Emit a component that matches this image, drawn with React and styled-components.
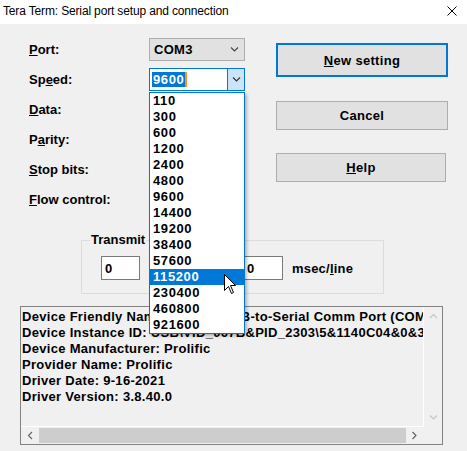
import React from 'react';
import styled, { createGlobalStyle } from 'styled-components';

const GlobalStyle = createGlobalStyle`
  html, body {
    margin: 0;
    padding: 0;
    background: #f0f0f0;
    overflow: hidden;
  }
  * { box-sizing: border-box; }
`

const Window = styled.div`
  width: 467px;
  height: 451px;
  position: relative;
  display: flex;
  flex-direction: column;
  background: #f0f0f0;
  font-family: "Liberation Sans", Arial, sans-serif;
  font-weight: 700;
  font-size: 13px;
  color: #000;
`
const TitleBar = styled.div`
  height: 24px;
  background: #fff;
  display: flex;
  align-items: center;
  justify-content: space-between;
  padding: 0 10px 2px 3px;
  font-weight: 400;
  font-size: 12px;
  letter-spacing: -0.15px;
`
const Top = styled.div`
  display: flex;
`
const Form = styled.div`
  display: grid;
  grid-template-columns: 120px 96px;
  grid-auto-rows: 23px;
  row-gap: 7px;
  padding: 14px 0 0 29px;
`
const Label = styled.div`
  display: flex;
  align-items: center;
  line-height: 16px;
`
const Combo = styled.div`
  display: flex;
  align-items: center;
  height: 23px;
  border: 1px solid ${p => (p.$focus ? '#0078d7' : '#adadad')};
  background: ${p => (p.$focus ? '#fff' : '#e1e1e1')};
`
const ComboText = styled.div`
  flex: 1;
  padding-left: 4px;
  display: flex;
  align-items: center;
  letter-spacing: 0.3px;
`
const Selected = styled.span`
  background: #0078d7;
  color: #fff;
  line-height: 15px;
  padding: 0 1px;
  margin-left: -2px;
  letter-spacing: 0.6px;
`
const Caret = styled.span`
  width: 2px;
  height: 15px;
  background: #f7931e;
`
const DropButton = styled.div`
  width: 17px;
  align-self: stretch;
  display: flex;
  align-items: center;
  justify-content: center;
  background: ${p => (p.$focus ? '#cce4f7' : 'transparent')};
  border-left: 1px solid ${p => (p.$focus ? '#0078d7' : 'transparent')};
  margin-right: ${p => (p.$focus ? '0' : '2px')};
`
const Buttons = styled.div`
  display: flex;
  flex-direction: column;
  align-items: flex-start;
  padding: 19px 0 0 31px;
`
const Button = styled.div`
  width: ${p => p.$w || 172}px;
  height: ${p => p.$h || 29}px;
  margin-bottom: ${p => p.$mb || 0}px;
  background: #e1e1e1;
  border: ${p => (p.$default ? '2px solid #0078d7' : '1px solid #adadad')};
  display: flex;
  align-items: center;
  justify-content: center;
  letter-spacing: 0.3px;
`
const Group = styled.fieldset`
  margin: 21px 0 0 81px;
  width: 303px;
  padding: 8px 0 13px 19px;
  border: 1px solid #dcdcdc;
  min-width: 0;
`
const Legend = styled.legend`
  margin-left: -11px;
  padding: 0 1px;
  line-height: 16px;
`
const GroupRow = styled.div`
  display: flex;
  align-items: center;
`
const Edit = styled.div`
  width: ${p => p.$w}px;
  height: 24px;
  background: #fff;
  border: 1px solid #7a7a7a;
  display: flex;
  align-items: center;
  padding-left: 3px;
`
const Unit = styled.div`
  width: ${p => p.$w || 'auto'};
  padding-left: ${p => p.$pl}px;
  letter-spacing: 0.2px;
`
const InfoBox = styled.div`
  margin: 12px 0 0 20px;
  width: 423px;
  height: 139px;
  border: 1px solid #828282;
  display: grid;
  grid-template-columns: 1fr 18px;
  grid-template-rows: 1fr 17px;
`
const InfoText = styled.div`
  overflow: hidden;
  white-space: nowrap;
  padding: 2px 0 0 1px;
  line-height: 16px;
  letter-spacing: 0.3px;
  background: #f0f0f0;
  border-right: 1px solid #fff;
  border-bottom: 1px solid #fff;
`
const VScroll = styled.div`
  display: flex;
  flex-direction: column;
  justify-content: space-between;
  align-items: center;
  padding: 6px 0 6px;
  background: #f0f0f0;
`
const HScroll = styled.div`
  display: flex;
  align-items: center;
  padding: 0 1px;
  background: #f0f0f0;
`
const Arrow = styled.div`
  width: 17px;
  height: 17px;
  display: flex;
  align-items: center;
  justify-content: center;
  flex: none;
`
const Thumb = styled.div`
  flex: 1;
  height: 15px;
  background: #cdcdcd;
`
const Corner = styled.div`
  background: #f0f0f0;
`
const DropList = styled.div`
  position: absolute;
  left: 149px;
  top: 92px;
  width: 96px;
  border: 1px solid #0078d7;
  background: #fff;
  box-shadow: 2px 2px 3px rgba(0, 0, 0, 0.25);
`
const Item = styled.div`
  height: 16px;
  line-height: 16px;
  padding-left: 3px;
  letter-spacing: 0.6px;
  background: ${p => (p.$active ? '#0078d7' : 'transparent')};
  color: ${p => (p.$active ? '#fff' : '#000')};
`
const Cursor = styled.svg`
  position: absolute;
  left: 224px;
  top: 274px;
`

const Chevron = ({ dir = 'down', color = '#444' }) => {
  const d = {
    down: 'M1 1.5 L4.5 5 L8 1.5',
    up: 'M1 5 L4.5 1.5 L8 5',
    left: 'M5 1 L1.5 4.5 L5 8',
    right: 'M1.5 1 L5 4.5 L1.5 8',
  }[dir];
  const vertical = dir === 'down' || dir === 'up';
  return (
    <svg width={vertical ? 9 : 7} height={vertical ? 7 : 9} viewBox={vertical ? '0 0 9 7' : '0 0 7 9'}>
      <path d={d} fill="none" stroke={color} strokeWidth="1.1" />
    </svg>
  );
};

const speeds = ['110', '300', '600', '1200', '2400', '4800', '9600', '14400', '19200', '38400', '57600', '115200', '230400', '460800', '921600'];

const info = [
  'Device Friendly Name: Prolific USB-to-Serial Comm Port (COM3)',
  'Device Instance ID: USB\\VID_067B&PID_2303\\5&1140C04&0&3',
  'Device Manufacturer: Prolific',
  'Provider Name: Prolific',
  'Driver Date: 9-16-2021',
  'Driver Version: 3.8.40.0',
];

export default function App() {
  return (
    <Window>
      <GlobalStyle />
      <TitleBar>
        <span>Tera Term: Serial port setup and connection</span>
        <svg width="10" height="10" viewBox="0 0 10 10">
          <path d="M0.5 0.5 L9.5 9.5 M9.5 0.5 L0.5 9.5" stroke="#000" strokeWidth="1" />
        </svg>
      </TitleBar>

      <Top>
        <Form>
          <Label><u>P</u>ort:</Label>
          <Combo>
            <ComboText>COM3</ComboText>
            <DropButton><Chevron /></DropButton>
          </Combo>

          <Label>Sp<u>e</u>ed:</Label>
          <Combo $focus>
            <ComboText><Selected>9600</Selected><Caret /></ComboText>
            <DropButton $focus><Chevron color="#333" /></DropButton>
          </Combo>

          {/* the remaining combos sit under the open list */}
          <Label><u>D</u>ata:</Label>
          <Combo><ComboText /><DropButton><Chevron /></DropButton></Combo>

          <Label>P<u>a</u>rity:</Label>
          <Combo><ComboText /><DropButton><Chevron /></DropButton></Combo>

          <Label><u>S</u>top bits:</Label>
          <Combo><ComboText /><DropButton><Chevron /></DropButton></Combo>

          <Label><u>F</u>low control:</Label>
          <Combo><ComboText /><DropButton><Chevron /></DropButton></Combo>
        </Form>

        <Buttons>
          <Button $default $h={34} $mb={24}><span><u>N</u>ew setting</span></Button>
          <Button $mb={23}>Cancel</Button>
          <Button $w={170}><span><u>H</u>elp</span></Button>
        </Buttons>
      </Top>

      <Group>
        <Legend>Transmit</Legend>
        <GroupRow>
          <Edit $w={39}>0</Edit>
          <Unit $w="103px" $pl={8} />
          <Edit $w={40}>0</Edit>
          <Unit $pl={9}>msec/<u>l</u>ine</Unit>
        </GroupRow>
      </Group>

      <InfoBox>
        <InfoText>
          {info.map(line => <div key={line}>{line}</div>)}
        </InfoText>
        <VScroll>
          <Chevron dir="up" color="#c4c4c4" />
          <Chevron dir="down" color="#c4c4c4" />
        </VScroll>
        <HScroll>
          <Arrow><Chevron dir="left" color="#606060" /></Arrow>
          <Thumb />
          <Arrow><Chevron dir="right" color="#606060" /></Arrow>
        </HScroll>
        <Corner />
      </InfoBox>

      <DropList>
        {speeds.map(s => <Item key={s} $active={s === '115200'}>{s}</Item>)}
      </DropList>

      <Cursor width="13" height="21" viewBox="0 0 13 21">
        <path d="M0.5 0.5 L0.5 16.5 L4.5 12.5 L7.5 19.5 L9.5 18.5 L6.5 11.5 L11.5 11.5 Z" fill="#fff" stroke="#000" strokeWidth="1" strokeLinejoin="miter" />
      </Cursor>
    </Window>
  );
}
